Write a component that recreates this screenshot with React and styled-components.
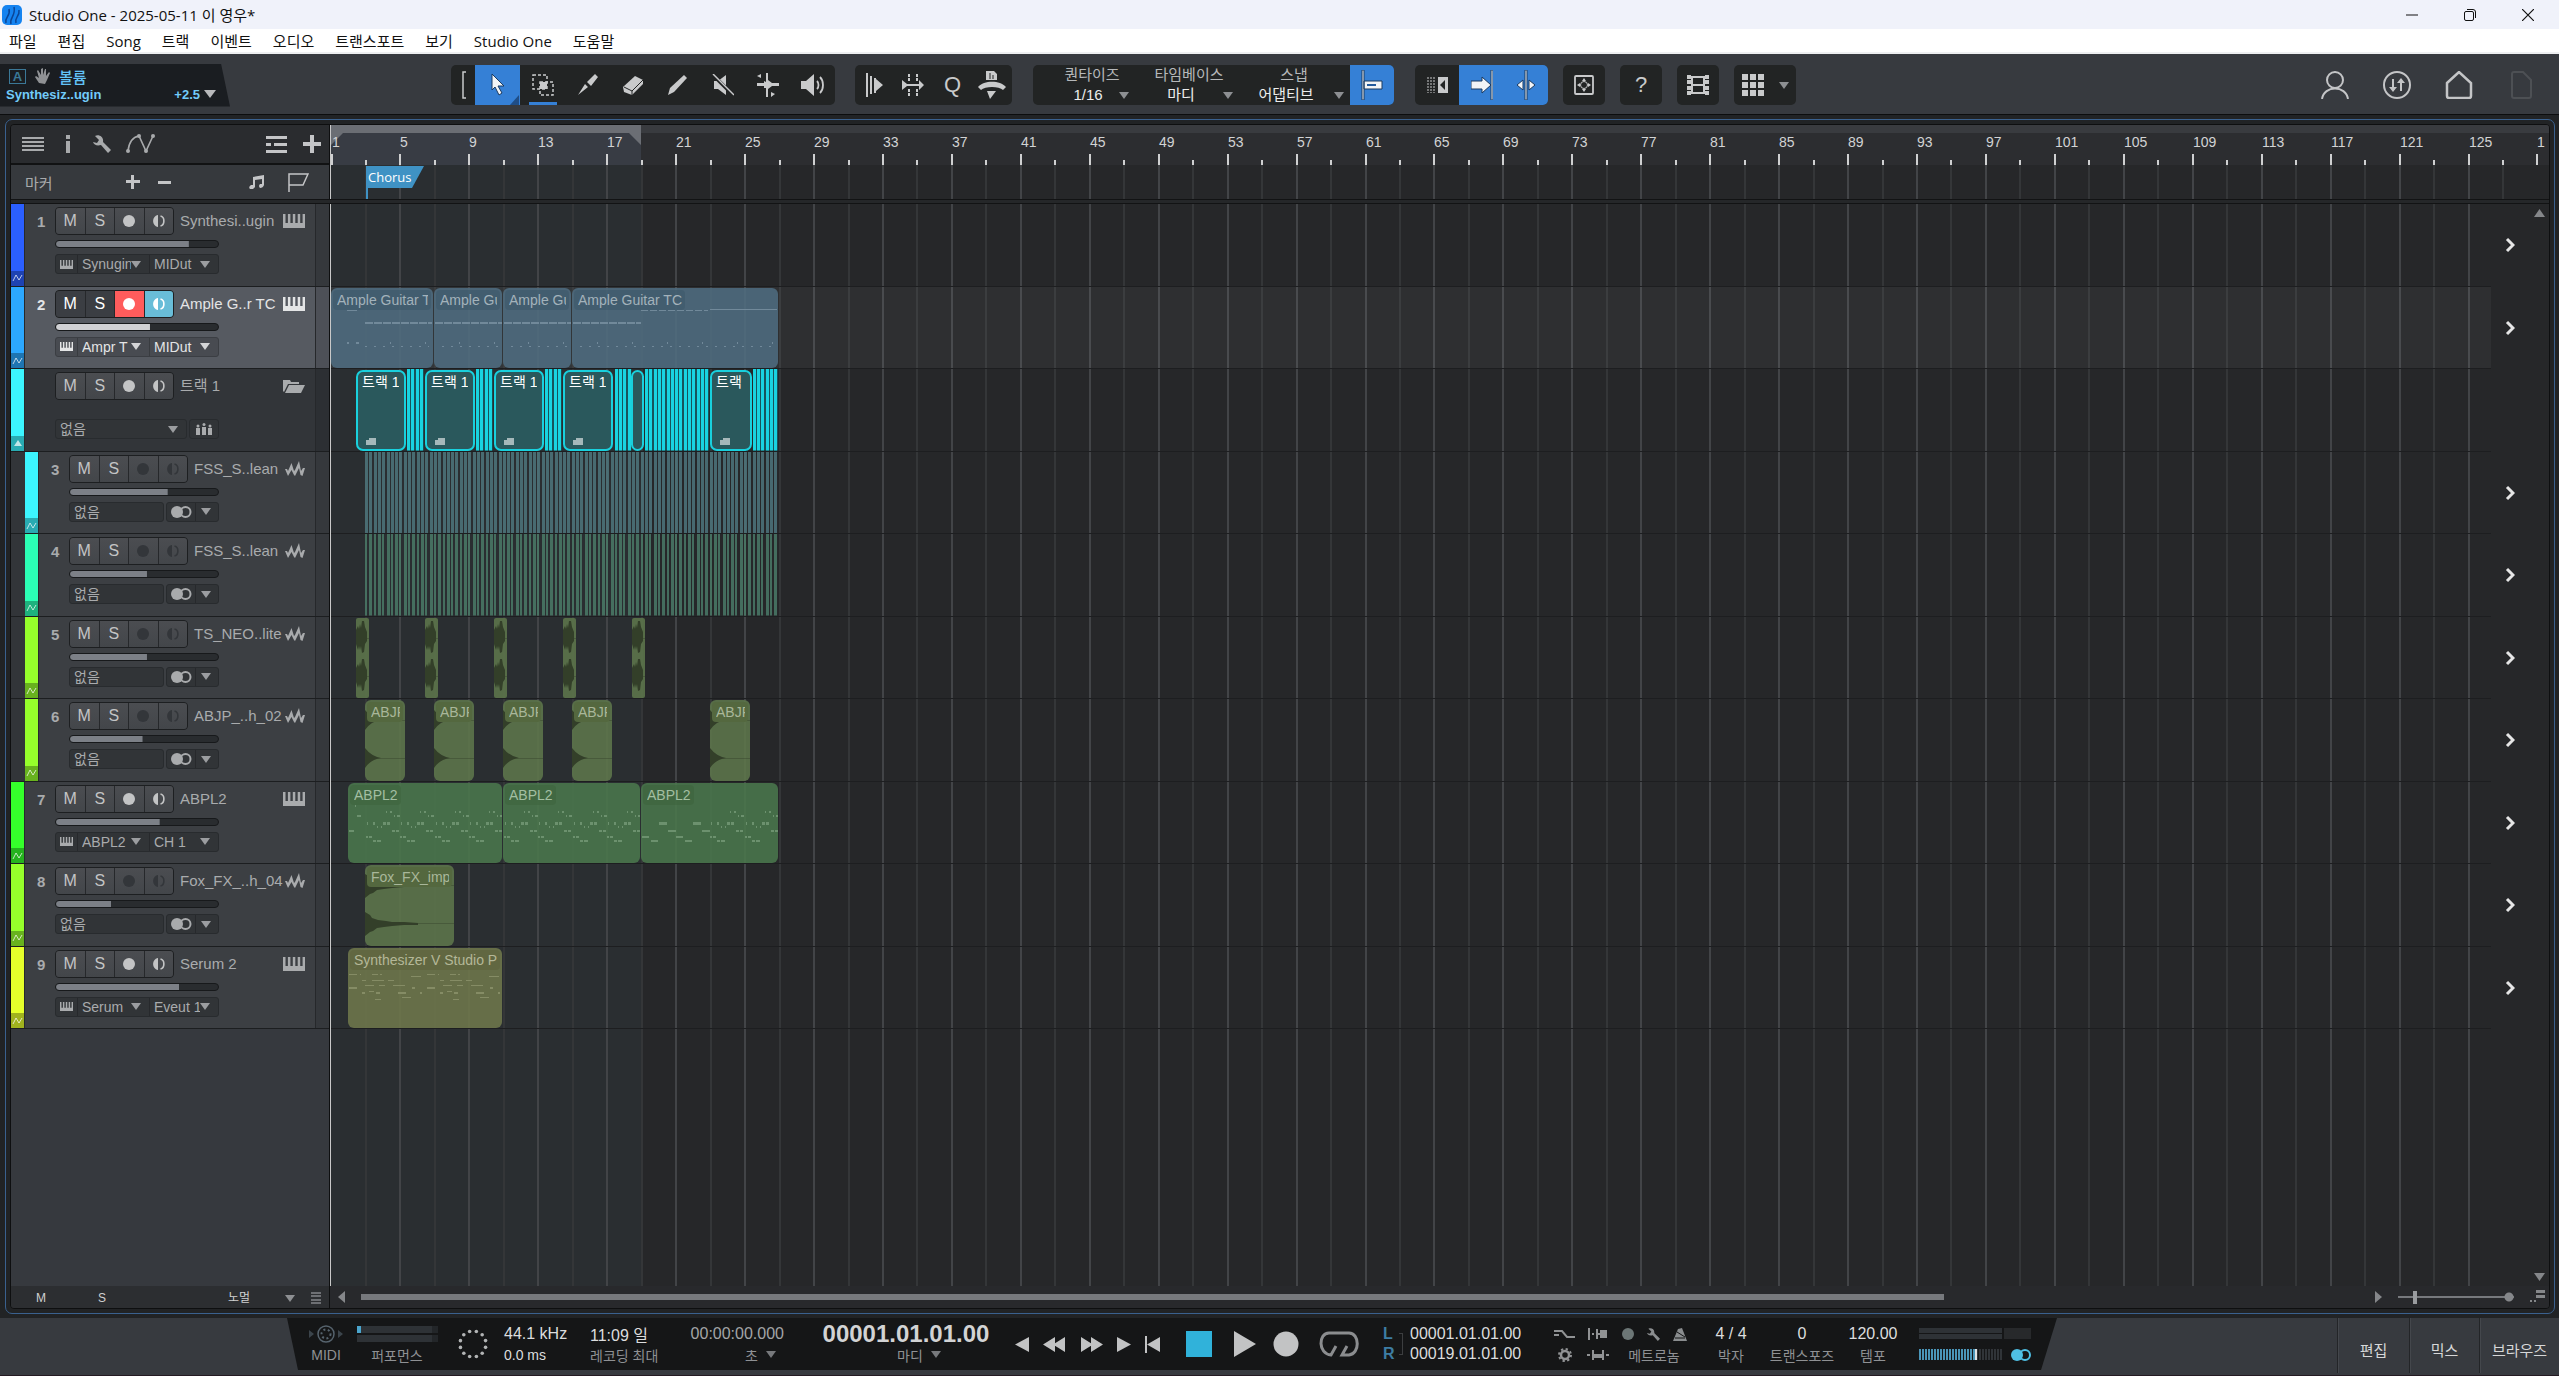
import React from 'react';
import styled, { createGlobalStyle, css } from 'styled-components';

const BAR = 17.234;
const LAST_BAR = 129;
const LOOP_END = 19;

const barX = (bar) => Math.floor((bar - 1) * BAR);

const GlobalStyle = createGlobalStyle`
  * { box-sizing: border-box; }
  html, body { margin: 0; height: 100%; }
  body {
    background: #232527;
    color: #a9abad;
    font-family: 'Liberation Sans', 'Noto Sans CJK KR', sans-serif;
    font-size: 15px;
    overflow: hidden;
  }
  button, select, input {
    margin: 0;
    padding: 0;
    border: none;
    border-radius: 0;
    background: none;
    color: inherit;
    font: inherit;
    appearance: none;
    outline: none;
  }
  svg { display: block; flex: none; }
`;

/* ---------- window ---------- */

const Window = styled.div`
  display: flex;
  flex-direction: column;
  height: 100vh;
`;

const TitleBar = styled.header`
  display: flex;
  align-items: center;
  height: 29px;
  padding: 0 2px;
  background: #f0f2fa;
  color: #111;
  font-family: 'Open Sans', 'Noto Sans CJK KR', sans-serif;
`;

const Title = styled.h1`
  margin: 0 auto 0 7px;
  font-size: 15px;
  font-weight: 400;
  line-height: 20px;
`;

const WindowButton = styled.button`
  display: grid;
  place-items: center;
  width: 58px;
  height: 29px;
`;

const MenuBar = styled.nav`
  display: flex;
  align-items: center;
  gap: 21px;
  height: 25px;
  padding-left: 9px;
  border-bottom: 2px solid #eeeff1;
  background: #fff;
  color: #111;
  font-family: 'Open Sans', 'Noto Sans CJK KR', sans-serif;
  font-size: 15px;
`;

const MenuItem = styled.button`
  line-height: 20px;
  white-space: nowrap;
`;

/* ---------- toolbar ---------- */

const Toolbar = styled.div`
  display: flex;
  align-items: center;
  height: 61px;
  padding-top: 2px;
  border-bottom: 1px solid #0c0d0e;
  background: #373a3f;
`;

const InfoBox = styled.div`
  display: flex;
  flex-direction: column;
  justify-content: center;
  width: 230px;
  height: 43px;
  margin-right: 221px;
  padding: 0 14px 0 6px;
  background: #1a1d21;
  clip-path: polygon(0 0, 221px 0, 230px 100%, 0 100%);
  color: #62c3f8;
`;

const InfoLine = styled.div`
  display: flex;
  align-items: center;
  gap: ${(p) => (p.$indent ? 8 : 4)}px;
  height: 18px;
  padding-left: ${(p) => (p.$indent ? '3px' : '0')};
  font-size: ${(p) => (p.$indent ? '15px' : '13px')};
  font-weight: ${(p) => (p.$indent ? 500 : 700)};
  color: ${(p) => (p.$indent ? '#62c3f8' : '#72cbfa')};
`;

const AutoMark = styled.span`
  width: 17px;
  height: 15px;
  border: 1px solid #3b7897;
  color: #3b7897;
  font-size: 13px;
  font-weight: 700;
  line-height: 13px;
  text-align: center;
`;

const Push = styled.span`
  margin-left: auto;
`;

const ToolGroup = styled.div`
  display: flex;
  height: 40px;
  margin-right: ${(p) => p.$gap || 15}px;
  border-radius: 5px;
  background: #222424;
  overflow: hidden;
`;

const ToolButton = styled.button`
  display: flex;
  align-items: center;
  justify-content: center;
  gap: 15px;
  width: ${(p) => p.$w || 45}px;
  height: 40px;
  background: ${(p) => (p.$on ? '#3580d6' : 'transparent')};
  color: ${(p) => (p.$on ? '#f2f4f6' : '#c9cacb')};
  font-size: 22px;
  ${(p) => p.$marked && css`
    background: linear-gradient(#3580d6, #3580d6) center bottom / 28px 3px no-repeat;
  `}
`;

const GroupHandle = styled.div`
  display: grid;
  place-items: center;
  width: 24px;
`;

const ToolField = styled.label`
  display: grid;
  grid-template-columns: 1fr 22px;
  grid-template-rows: 20px 20px;
  align-items: center;
  width: ${(p) => p.$w}px;
  padding-left: ${(p) => p.$pad}px;
  color: #b6b8ba;
  line-height: 18px;
  text-align: center;
  white-space: nowrap;

  span {
    grid-column: 1 / -1;
    padding-right: ${(p) => (p.$pad > 20 ? 14 : 6)}px;
  }

  select {
    color: #eceded;
    text-align-last: center;
  }

  svg { justify-self: center; }
`;

const RightTools = styled.div`
  display: flex;
  gap: 34px;
  margin: 0 24px 0 auto;
  color: #c4c5c7;
`;

const PlainButton = styled.button`
  display: grid;
  place-items: center;
  min-width: ${(p) => p.$w || 0}px;
  color: ${(p) => p.$color || 'inherit'};
`;

/* ---------- workspace ---------- */

const Workspace = styled.main`
  flex: 1;
  min-height: 0;
  display: flex;
  padding: 4px 4px 4px 5px;
  background: #212325;
`;

const Frame = styled.section`
  flex: 1;
  min-width: 0;
  padding: 4px;
  border: 1px solid #3a618f;
  border-radius: 7px;
`;

const Panel = styled.div`
  display: grid;
  grid-template-columns: 319px minmax(0, 1fr);
  grid-template-rows: 40px 34px 5px minmax(0, 1fr) 22px;
  height: 100%;
  border: 1px solid #0e0f10;
  border-radius: 4px;
  background: #252628;
  overflow: hidden;
`;

const SideCell = styled.div`
  display: flex;
  align-items: center;
  border-right: 1px solid #0e0f10;
`;

const SideTools = styled(SideCell)`
  gap: 14px;
  padding: 0 8px 0 11px;
  border-bottom: 2px solid #111213;
  background: #2a2c2f;
  color: #a8aaac;
`;

const MarkerHead = styled(SideCell)`
  padding: 0 20px 0 14px;
  background: #36393d;
  color: #a8aaac;
`;

const MarkerTools = styled.div`
  display: flex;
  align-items: center;
  gap: ${(p) => p.$gap}px;
  margin-left: ${(p) => p.$left || 'auto'};
  color: #c4c5c7;
`;

const Divider = styled.div`
  grid-column: 1 / -1;
  border: 1px solid #121314;
  border-width: 1px 0;
  background: #252729;
`;

const loopBackground = (inner, outer) => css`
  background: linear-gradient(${inner}, ${inner}) left / ${barX(LOOP_END)}px 100% no-repeat ${outer};
`;

const Ruler = styled.div`
  position: relative;
  border-left: 1px solid #c9c9c9;
  overflow: hidden;
  ${loopBackground('#383c44', '#2c2d30')}
`;

const BarNumber = styled.span`
  position: absolute;
  top: 9px;
  color: #d2d3d4;
  font-size: 14px;
  line-height: 16px;
`;

const MarkerLane = styled.div`
  position: relative;
  border-left: 1px solid #c9c9c9;
  overflow: hidden;
  ${loopBackground('#2a2e31', '#262729')}
`;

const Canvas = styled.svg`
  position: absolute;
  inset: 0;
  width: 100%;
  height: 100%;
`;

const MarkerFlag = styled.div`
  position: absolute;
  top: 1px;
  height: 33px;
  border-left: 2px solid #3f92c4;
`;

const MarkerName = styled.span`
  display: block;
  width: 56px;
  height: 22px;
  background: #3f92c4;
  clip-path: polygon(0 0, 100% 0, 44px 100%, 0 100%);
  color: #fff;
  font-family: 'Open Sans', sans-serif;
  font-size: 13px;
  line-height: 23px;
`;

/* ---------- track list ---------- */

const TrackColumn = styled.div`
  border-right: 1px solid #0e0f10;
  background: #36393e;
  overflow: hidden;
`;

const TrackRows = styled.div`
  display: grid;
  grid-template-rows: repeat(10, 1fr);
  height: 825px;
`;

const Track = styled.div`
  display: grid;
  grid-template-columns: 14px minmax(0, 1fr) 14px;
  padding-left: ${(p) => (p.$nested ? 14 : 0)}px;
  border-bottom: 1px solid #1c1e20;
  background: ${(p) => (p.$selected ? '#565a61' : p.$folder ? '#323539' : p.$nested ? 'linear-gradient(90deg, #323539 14px, #3c3f43 14px)' : '#3c3f43')};
  color: ${(p) => (p.$selected ? '#e4e5e6' : '#a9abad')};
`;

const ColorBar = styled.div`
  display: flex;
  flex-direction: column;
  justify-content: flex-end;
  border-right: 1px solid #27292c;
  background: ${(p) => p.$color};
`;

const ColorFoot = styled.div`
  display: grid;
  place-items: center;
  height: 15px;
  background: rgba(0, 0, 0, 0.3);
  color: rgba(255, 255, 255, 0.7);
`;

const TrackStrip = styled.div`
  border-left: 1px solid #26282b;
  background: rgba(0, 0, 0, 0.1);
`;

const TrackBody = styled.div`
  display: grid;
  grid-template-columns: 30px minmax(0, 1fr);
  grid-template-rows: 33px 11px 26px;
`;

const TrackNumber = styled.span`
  padding-left: 12px;
  font-weight: 700;
  line-height: 36px;
`;

const TrackTop = styled.div`
  display: flex;
  align-items: center;
  padding: 1px 10px 0 0;
`;

const TrackName = styled.span`
  flex: 1;
  padding-left: 6px;
  line-height: 24px;
  white-space: nowrap;
`;

const ButtonRow = styled.div`
  display: grid;
  grid-template-columns: repeat(4, 1fr);
  gap: 1px;
  width: 119px;
  height: 28px;
  border: 1px solid #1d1f21;
  border-radius: 4px;
  background: #26282b;
  overflow: hidden;
`;

const TrackButton = styled.button`
  display: grid;
  place-items: center;
  background: ${(p) => p.$bg || 'linear-gradient(#4b4d51, #43464a)'};
  color: ${(p) => (p.$bg ? '#fff' : p.$off ? '#33363a' : '#c3c4c5')};
  font-size: 16px;
`;

const NoFader = styled.span`
  grid-column: 2;
`;

const Fader = styled.input`
  grid-column: 2;
  align-self: end;
  width: ${(p) => (p.$nested ? 150 : 164)}px;
  height: 8px;
  border: 1px solid #17191b;
  border-radius: 4px;
  background: linear-gradient(${(p) => p.$fill}, ${(p) => p.$fill}) left / ${(p) => p.value}% 100% no-repeat #292c2f;

  &::-webkit-slider-thumb { appearance: none; width: 1px; height: 6px; }
`;

const Routing = styled.div`
  grid-column: 2;
  align-self: end;
  display: flex;
  gap: 2px;
  width: ${(p) => (p.$nested ? 150 : 164)}px;
  height: 20px;
`;

const Slot = styled.label`
  display: flex;
  align-items: center;
  flex: ${(p) => (p.$w ? `0 0 ${p.$w}px` : '1')};
  min-width: 0;
  border: 1px solid ${(p) => (p.$bright ? '#3b3e43' : '#282b2e')};
  border-radius: 3px;
  background: ${(p) => (p.$bright ? 'rgba(0, 0, 0, 0.16)' : '#313437')};
  font-size: 14px;
`;

const SlotPart = styled.span`
  display: flex;
  align-items: center;
  justify-content: ${(p) => (p.$center ? 'center' : 'space-between')};
  width: ${(p) => p.$w}px;
  height: 18px;
  padding: ${(p) => (p.$center ? '0' : '0 8px 0 4px')};
  border-left: ${(p) => (p.$line ? '1px solid rgba(0, 0, 0, 0.2)' : 'none')};

  select {
    flex: 1;
    min-width: 0;
    overflow: hidden;
  }
`;

/* ---------- arrangement ---------- */

const Arrange = styled.div`
  display: grid;
  grid-template-columns: minmax(0, 1fr) 38px 20px;
  border-left: 1px solid #c9c9c9;
  background: #262729;
  overflow: hidden;
`;

const Lanes = styled.div`
  position: relative;
  overflow: hidden;
  ${loopBackground('#2a2e31', '#262729')}
`;

const LaneRows = styled(TrackRows)`
  position: relative;
`;

const Lane = styled.div`
  position: relative;
  border-bottom: 1px solid #1d1e20;
  background: ${(p) => (p.$selected ? 'rgba(255, 255, 255, 0.04)' : 'transparent')};
`;

const ChevronCell = styled.div`
  display: grid;
  place-items: center;
  color: #e6e6e6;
`;

const ScrollColumn = styled.div`
  display: flex;
  flex-direction: column;
  justify-content: space-between;
  align-items: center;
  padding: 5px 0;
  color: #85878a;
`;

const Clip = styled.div`
  position: absolute;
  top: 1px;
  bottom: 0;
  border-radius: ${(p) => (p.$narrow ? 2 : 6)}px;
  background: ${(p) => p.$color};
  overflow: hidden;
  ${(p) => p.$framed && css`
    border: 2px solid #19d0dd;
    border-radius: 7px;
  `}
`;

const ClipLabel = styled.span`
  position: absolute;
  z-index: 1;
  top: ${(p) => (p.$framed ? 0 : 2)}px;
  left: 2px;
  max-width: calc(100% - 4px);
  height: 20px;
  padding: 0 ${(p) => (p.$framed ? 0 : 3)}px 0 ${(p) => (p.$framed ? 2 : 4)}px;
  border-radius: 4px;
  background: ${(p) => p.$bg};
  color: ${(p) => p.$color};
  font-size: 14px;
  line-height: 20px;
  white-space: nowrap;
  overflow: hidden;
`;

const ClipText = styled.span`
  display: block;
  overflow: hidden;
`;

const FolderMark = styled.svg`
  position: absolute;
  left: 8px;
  bottom: 4px;
`;

/* ---------- panel footer ---------- */

const SideFoot = styled(SideCell)`
  padding: 2px 8px 0 25px;
  background: #2c2e31;
  color: #d0d1d2;
  font-size: 12px;
`;

const FootButton = styled.button`
  width: ${(p) => p.$w}px;
  text-align: left;
`;

const FootMode = styled.label`
  display: flex;
  align-items: center;
  gap: 34px;
  margin: 0 16px 0 auto;
`;

const ScrollRow = styled.div`
  display: flex;
  align-items: center;
  gap: 10px;
  padding: 0 4px 0 8px;
  background: #28292c;
  color: #85878a;
`;

const ScrollTrack = styled.div`
  flex: 1;
  margin: 0 0 0 6px;
`;

const ScrollThumb = styled.div`
  width: 79%;
  height: 6px;
  background: #77797d;
`;

const ZoomSlider = styled.input`
  width: 116px;
  height: 14px;
  margin: 0 6px;
  background:
    radial-gradient(circle, #85878a 4px, transparent 5px) right / 10px 10px no-repeat,
    linear-gradient(#77797d, #77797d) center / 100% 2px no-repeat;

  &::-webkit-slider-thumb {
    appearance: none;
    width: 4px;
    height: 13px;
    background: #9a9c9f;
  }
`;

/* ---------- transport ---------- */

const TransportBar = styled.footer`
  display: flex;
  height: 58px;
  padding-left: 287px;
  background: #373a3f;
  border-bottom: 1px solid #241a22;
`;

const Transport = styled.div`
  display: flex;
  align-items: center;
  width: 1770px;
  height: 52px;
  padding-left: 13px;
  background: #151617;
  clip-path: polygon(0 0, 100% 0, 1754px 100%, 11px 100%);
`;

const Cell = styled.div`
  display: flex;
  flex-direction: column;
  align-items: ${(p) => p.$align || 'center'};
  width: ${(p) => p.$w}px;
  padding-right: ${(p) => p.$right || 0}px;
`;

const Value = styled.div`
  display: flex;
  align-items: center;
  justify-content: center;
  height: 21px;
  color: ${(p) => p.$color || '#dcddde'};
  font-size: ${(p) => (p.$big ? 24 : 16)}px;
  font-weight: ${(p) => (p.$big ? 700 : 400)};
  white-space: nowrap;
`;

const Caption = styled.div`
  display: flex;
  align-items: center;
  gap: 8px;
  height: 20px;
  padding-left: ${(p) => p.$left || 0}px;
  padding-right: ${(p) => p.$right || 0}px;
  color: ${(p) => p.$color || '#8f9194'};
  font-size: 14px;
  white-space: nowrap;
`;

const TransportButton = styled.button`
  display: grid;
  place-items: center;
  width: ${(p) => p.$w}px;
  height: 40px;
  color: ${(p) => p.$color || '#c2c3c4'};
`;

const Locators = styled.div`
  display: grid;
  grid-template-columns: 16px 11px auto;
  grid-template-rows: 20px 20px;
  align-items: center;
  width: 177px;
  padding-left: 12px;
  color: #dcddde;
  font-size: 16px;

  b { color: #3d7da3; }
`;

const LocatorLink = styled.span`
  grid-column: 2;
  grid-row: 1 / 3;
  width: 4px;
  height: 22px;
  border: 1px solid #3c3e40;
  border-width: 1px 1px 1px 0;
`;

const IconGrid = styled.div`
  display: grid;
  grid-template-columns: 33px 33px;
  grid-template-rows: 21px 20px;
  place-items: center;
  width: 67px;
  color: #909294;
`;

const IconLine = styled.div`
  display: flex;
  align-items: center;
  gap: 13px;
  height: 21px;
  color: #8a8d8f;
`;

const ViewButtons = styled.div`
  display: grid;
  grid-template-columns: 72px 70px 80px;
  margin-left: auto;
  height: 55px;
`;

const ViewButton = styled.button`
  border-left: 1px solid #232528;
  box-shadow: inset 1px 0 #44474c;
  padding-top: 8px;
  color: #d6d7d8;
  font-size: 15px;
`;

/* ---------- icons ---------- */

const Glyph = ({ w, h, children, ...rest }) => (
  <svg width={w} height={h} viewBox={`0 0 ${w} ${h}`} fill="currentColor" aria-hidden="true" {...rest}>
    {children}
  </svg>
);

const line = { fill: 'none', stroke: 'currentColor' };

const Down = ({ color = '#8d8f92' }) => (
  <Glyph w={10} h={7} style={{ color }}><path d="M0 0h10L5 7z" /></Glyph>
);

const Piano = ({ small }) => (
  <svg width={small ? 13 : 22} height={small ? 9 : 14} viewBox="0 0 22 14" preserveAspectRatio="none" fill="currentColor" aria-hidden="true">
    <path d="M0 0h2.500v9h2.400V0h2.500v9h2.400V0h2.500v9h2.400V0h2.500v9h2.400V0H22v14H0z" />
  </svg>
);

const Wave = () => (
  <Glyph w={20} h={16}>
    <path d="M0 8l2 0 1 2L6.500 2l2.500 8 1-1L14 0l2 10 2-3h2l-2.500 8-2-1L14 7l-4 8-1-1-2.500-5L3 15z" />
  </Glyph>
);

const Wrench = ({ size = 18 }) => (
  <svg width={size} height={size} viewBox="0 0 18 18" fill="currentColor" aria-hidden="true">
    <path d="M2 1c4-2 9 1 8 6l8 8-3 3-7-8c-4 1-7 0-8-3l4 1 2-3z" />
  </svg>
);

const Monitor = () => (
  <Glyph w={12} h={12}>
    <path d="M5 0v12C-1.500 11-1.500 1 5 0z" />
    <path d="M7.500 1c4.500 1 4.500 9 0 10" {...line} strokeWidth="1.600" />
  </Glyph>
);

const Stereo = ({ color }) => (
  <Glyph w={21} h={12} style={{ color }}>
    <circle cx="6" cy="6" r="6" />
    <circle cx="14.500" cy="6" r="5" {...line} strokeWidth="2" />
  </Glyph>
);

const FolderIcon = () => (
  <Glyph w={22} h={14}><path d="M0 1h7l1 2h8v2H5L1 13l-1-1zM6 6h16l-4 8H2z" /></Glyph>
);

const Tool = ({ name }) => {
  switch (name) {
    case 'arrow':
      return <Glyph w={44} h={40}><path d="M16 9l12 12h-6l4 7-3 2-4-8-3 3z" stroke="#1b3a60" /><path d="M43 30v10h-9z" fill="#1f4d86" /></Glyph>;
    case 'range':
      return (
        <Glyph w={22} h={22}>
          <path d="M1 1h14v14H1z" {...line} strokeWidth="1.500" strokeDasharray="3 2" />
          <path d="M8 8h13v13H8z" {...line} strokeWidth="1.500" strokeDasharray="3 2" />
          <path d="M8 8h7v7H8z" />
        </Glyph>
      );
    case 'split':
      return <Glyph w={22} h={22}><path d="M1 21l7-11 3 3zM10 8l8-8 3 3-7 9z" /></Glyph>;
    case 'eraser':
      return <Glyph w={22} h={20}><path d="M1 12L13 1l8 4v4L10 20l-8-3z" /><path d="M2 12l8 4L21 5M10 16v4" fill="none" stroke="#222424" /></Glyph>;
    case 'paint':
      return <Glyph w={22} h={22}><path d="M1 21l2-7L17 1l3 3L7 18z" /></Glyph>;
    case 'mute':
      return <Glyph w={22} h={22}><path d="M2 7h4l8-6v20l-8-6H2z" /><path d="M0 0l22 22" stroke="#222424" strokeWidth="3.500" /><path d="M1 0l21 21" {...line} strokeWidth="1.500" /></Glyph>;
    case 'bend':
      return <Glyph w={22} h={24}><path d="M0 10h7V8l2 1V0h2v7l4 3h7v3h-7l-4 3v8H9v-9l-2 0v-2H0zM4 1v4L0 3zM14 19v5l4-3z" /></Glyph>;
    case 'listen':
      return <Glyph w={24} h={22}><path d="M0 7h5l8-7v22l-8-7H0z" /><path d="M16 7c2 2 2 6 0 8M19 3c4 4 4 12 0 16" {...line} strokeWidth="1.800" /></Glyph>;
    case 'strip':
      return <Glyph w={17} h={24}><path d="M0 0h2v24H0zM4 3h2v18H4zM8 5h2v4l0-3 7 6-7 6v2H8z" /></Glyph>;
    case 'stretch':
      return <Glyph w={22} h={22}><path d="M0 6l5 4h12V6l5 5-5 5v-4H5l-5 4z" /><path d="M7 0v7M7 15v7M15 0v7M15 15v7" {...line} strokeWidth="2" strokeDasharray="3 1" /></Glyph>;
    case 'humanize':
      return <Glyph w={28} h={28}><path d="M8 0h8l3 3v6H8zM0 16c6-7 22-7 28 0l-3 3c-4-4-18-4-22 0zM9 20h9l-6 8z" /><path d="M12 2v6M15 4v4" stroke="#222424" /></Glyph>;
    case 'snap':
      return <Glyph w={22} h={30}><path d="M1 0h2v30H1zM3 11h18v8H3z" stroke="#1b3a60" /><path d="M6 14h9v2H6z" fill="#235a9c" /></Glyph>;
    case 'back':
      return <Glyph w={21} h={16}><path d="M1 0v16M4 0v16M7 0v16" {...line} strokeDasharray="2 1" /><path d="M11 0h10v16H11z" /><path d="M18 3v10l-5-5z" fill="#222424" /></Glyph>;
    case 'follow':
      return <Glyph w={22} h={30}><path d="M0 11h11V7l9 8-9 8v-4H0zM20 0h2v30h-2z" stroke="#1b3a60" /></Glyph>;
    case 'cursor':
      return <Glyph w={18} h={30}><path d="M8 0h2v30H8zM6 10v10l-6-5zM12 10v10l6-5z" stroke="#1b3a60" /></Glyph>;
    case 'target':
      return <Glyph w={20} h={20}><rect x="1" y="1" width="18" height="18" rx="1" {...line} strokeWidth="1.800" /><circle cx="10" cy="10" r="3.500" {...line} /><path d="M10 3l2 3H8zM10 17l2-3H8zM3 10l3-2v4zM17 10l-3-2v4z" /></Glyph>;
    case 'film':
      return <Glyph w={22} h={20}><path d="M5 2h12v16H5zM5 10h12" {...line} strokeWidth="2" /><path d="M0 0h4v4H0zM0 5h4v4H0zM0 11h4v4H0zM0 16h4v4H0zM18 0h4v4h-4zM18 5h4v4h-4zM18 11h4v4h-4zM18 16h4v4h-4z" /></Glyph>;
    case 'grid':
      return <Glyph w={22} h={22}>{[0, 8, 16].map((x) => [0, 8, 16].map((y) => <rect key={`${x}-${y}`} x={x} y={y} width="6" height="6" />))}</Glyph>;
    default:
      return null;
  }
};

/* ---------- data ---------- */

const menu = ['파일', '편집', 'Song', '트랙', '이벤트', '오디오', '트랜스포트', '보기', 'Studio One', '도움말'];

const tracks = [
  { no: 1, name: 'Synthesi..ugin', color: '#2b5fff', kind: 'midi', level: 82, input: 'Synugin', output: 'MIDut' },
  { no: 2, name: 'Ample G..r TC', color: '#2ca8ff', kind: 'midi', level: 58, input: 'Ampr T', output: 'MIDut', selected: true },
  { name: '트랙 1', color: '#3cf5ff', kind: 'folder' },
  { no: 3, name: 'FSS_S..lean', color: '#3cf5ff', kind: 'audio', level: 66, nested: true },
  { no: 4, name: 'FSS_S..lean', color: '#2bffb5', kind: 'audio', level: 52, nested: true },
  { no: 5, name: 'TS_NEO..lite', color: '#96ff2b', kind: 'audio', level: 52, nested: true },
  { no: 6, name: 'ABJP_..h_02', color: '#96ff2b', kind: 'audio', level: 49, nested: true },
  { no: 7, name: 'ABPL2', color: '#35ff2b', kind: 'midi', level: 64, input: 'ABPL2', output: 'CH 1' },
  { no: 8, name: 'Fox_FX_..h_04', color: '#96ff2b', kind: 'audio', level: 34 },
  { no: 9, name: 'Serum 2', color: '#e5ff2b', kind: 'midi', level: 76, input: 'Serum', output: 'Eveut 1' },
];

const BLUE = 'rgba(79, 108, 128, 0.88)';
const GREEN = 'rgba(74, 120, 76, 0.88)';
const OLIVE = 'rgba(93, 118, 75, 0.88)';
const SAND = 'rgba(110, 119, 75, 0.88)';

const dashes = (from, to, y, step, w, h = 2) => {
  const out = [];
  for (let x = from; x < to; x += step) out.push([x, y, Math.min(w, to - x), h]);
  return out;
};

const guitarNotes = (width, lead) => [
  ...(lead ? [[16, 22, 10, 1], [16, 54, 2, 2], [25, 54, 3, 2]] : []),
  ...dashes(lead ? 34 : 1, Math.min(width, 69 + (lead ? 32 : 0)), 34, 9, 8),
  ...(width > 150 ? dashes(65, 68, 34, 9, 3) : []),
  ...dashes(lead ? 34 : 8, width - 4, 58, 9, 2, 1),
  ...dashes(lead ? 59 : 25, width - 2, 54, 35, 1, 2),
  ...(width > 150 ? [...dashes(69, 136, 22, 9, 7, 1), [138, 21, 67, 1]] : []),
];

const riff = [
  [1, 39, 1, 3], [7, 39, 2, 3], [17, 39, 3, 3], [21, 39, 3, 3],
  [11, 43, 1, 2], [15, 43, 1, 2], [20, 28, 1, 2], [24, 28, 2, 2],
  [28, 32, 1, 2], [31, 32, 3, 2], [26, 47, 3, 2], [30, 47, 3, 2],
  [0, 53, 2, 2], [3, 53, 3, 2], [7, 57, 3, 2], [11, 57, 4, 2],
];

const sparse = [[17, 39, 8, 3], [26, 47, 8, 2], [0, 53, 7, 2], [9, 57, 7, 2]];

const repeat = (pattern, offsets) => offsets.flatMap((o) => pattern.map(([x, y, w, h]) => [x + o, y, w, h]));

const pickup = [[7, 22, 1, 2], [9, 32, 4, 2], [1, 47, 5, 2]];

const serumPhrase = [
  [1, 26, 8, 1], [12, 26, 1, 1], [24, 26, 6, 1], [32, 26, 2, 1], [14, 32, 4, 1], [24, 32, 12, 1], [40, 32, 6, 1],
  [17, 37, 9, 1], [31, 37, 6, 1], [45, 37, 12, 1], [1, 39, 8, 2], [14, 44, 3, 2], [28, 44, 4, 2], [50, 44, 8, 2],
  [21, 43, 5, 1], [54, 49, 9, 1], [27, 51, 6, 1], [64, 39, 3, 2], [72, 44, 2, 2], [63, 28, 10, 1],
];

const BLUE_INK = '#71899a';
const GREEN_INK = '#6c916e';
const SAND_INK = '#858c65';

const clips = {
  1: [
    { from: 1, to: 7, color: BLUE, label: 'Ample Guitar T', notes: guitarNotes(102, true), ink: BLUE_INK },
    { from: 7, to: 11, color: BLUE, label: 'Ample Gu', notes: guitarNotes(68), ink: BLUE_INK },
    { from: 11, to: 15, color: BLUE, label: 'Ample Gu', notes: guitarNotes(68), ink: BLUE_INK },
    { from: 15, to: 27, color: BLUE, label: 'Ample Guitar TC', notes: guitarNotes(206), ink: BLUE_INK },
  ],
  2: [
    ...[2.5, 6.5, 10.5, 14.5].map((b) => ({ from: b, to: b + 2.95, framed: true, label: '트랙 1' })),
    { from: 18.45, to: 19.25, framed: true },
    { from: 23, to: 25.5, framed: true, label: '트랙' },
  ],
  5: [2.5, 6.5, 10.5, 14.5, 18.5].map((b) => ({ from: b, to: b + 0.8, color: OLIVE, wave: 'burst', narrow: true })),
  6: [3, 7, 11, 15, 23].map((b) => ({ from: b, to: b + 2.4, color: OLIVE, wave: 'decay', label: 'ABJP' })),
  7: [
    { from: 2, to: 11, color: GREEN, label: 'ABPL2', notes: [...pickup, ...repeat(riff, [18, 52, 87, 121])], ink: GREEN_INK },
    { from: 11, to: 19, color: GREEN, label: 'ABPL2', notes: repeat(riff, [1, 35, 70, 104]), ink: GREEN_INK },
    { from: 19, to: 27, color: GREEN, label: 'ABPL2', notes: [...repeat(sparse, [1, 35]), ...repeat(riff, [69, 104])], ink: GREEN_INK },
  ],
  8: [{ from: 3, to: 8.2, color: OLIVE, wave: 'long', label: 'Fox_FX_imp' }],
  9: [{ from: 2, to: 11, color: SAND, label: 'Synthesizer V Studio P', notes: repeat(serumPhrase, [0, 78]), ink: SAND_INK }],
};

const labelColors = {
  [BLUE]: ['rgba(60, 88, 106, 0.55)', '#a3b2bb'],
  [GREEN]: ['rgba(62, 100, 62, 0.6)', '#a3bfa2'],
  [OLIVE]: ['#54683f', '#a9b79a'],
  [SAND]: ['rgba(96, 100, 62, 0.7)', '#b4b798'],
};

const wavePaths = {
  burst: (c) => `M0 ${c - 8}l2-4 1 3 1-5 1 4 1-7 2 0 1 6 2 5 0 9-2 3-1 8-2 1-1-7-1 4-1-4-1 4-2-6z`,
  decay: (c) => `M0 ${c - 10}q6 8 16 10q-10 1-16 10z`,
  long: (c) => `M0 ${c - 11}l5 3 2 3 6 2 8 1 6 1 12 0 14 1v2l-14 0-12 1-8 1-7 1-4 3-3 1-5 4z`,
};

/* ---------- parts ---------- */

function GridLines() {
  const bars = [];
  for (let b = 3; b < LAST_BAR; b += 2) bars.push(b);
  return (
    <Canvas aria-hidden="true">
      {bars.map((b) => (
        <rect key={b} x={barX(b)} y="0" width="2" height="100%" fill={b % 4 === 1 ? '#424447' : '#343638'} />
      ))}
    </Canvas>
  );
}

function BarRuler() {
  const bars = [];
  for (let b = 1; b <= LAST_BAR; b += 2) bars.push(b);
  const end = barX(LOOP_END);
  return (
    <Ruler>
      <Canvas aria-hidden="true">
        <rect width="100%" height="8" fill="#393b3f" />
        <path d={`M0 0H${end}V20L${end - 12} 8H12L0 20z`} fill="#6b6e74" />
        {bars.map((b) => (
          <rect key={b} x={barX(b)} y={b % 4 === 1 ? 29 : 35} width="2" height="12" fill="#cfd0d1" />
        ))}
      </Canvas>
      {bars.filter((b) => b % 4 === 1).map((b) => (
        <BarNumber key={b} style={{ left: barX(b) + 1 }}>{b === LAST_BAR ? '1' : b}</BarNumber>
      ))}
    </Ruler>
  );
}

function Stripes({ ranges, fill, thin, base }) {
  return (
    <Canvas aria-hidden="true">
      {ranges.map(([from, to]) => {
        const out = [];
        const count = Math.round((to - from) * 4);
        for (let i = 0; i < count; i += 1) {
          const x = Math.floor((from - 1) * BAR + i * (BAR / 4));
          out.push(<rect key={i} x={x} y="0" width={thin && i % 2 === 0 ? 2 : 3} height="100%" fill={fill} />);
        }
        return (
          <g key={from}>
            {base && <rect x={(from - 1) * BAR} width={(to - from) * BAR - 1} height="100%" fill={base} />}
            {out}
          </g>
        );
      })}
    </Canvas>
  );
}

function ClipView({ from, to, color = '#2a585c', framed, label, notes, ink, wave, narrow }) {
  const [bg, fg] = framed ? ['transparent', '#fff'] : labelColors[color];
  const left = barX(from);
  return (
    <Clip $color={color} $framed={framed} $narrow={narrow} style={{ left, width: barX(to) - left - 1 }}>
      {label && <ClipLabel $framed={framed} $bg={bg} $color={fg}><ClipText>{label}</ClipText></ClipLabel>}
      {notes && (
        <Canvas fill={ink} aria-hidden="true">
          {notes.map(([x, y, w, h], i) => <rect key={i} x={x} y={y} width={w} height={h} />)}
        </Canvas>
      )}
      {wave && (
        <Canvas fill="#333f29" aria-hidden="true">
          {[20, 58].map((c) => (
            <g key={c}>
              <rect y={c} width="100%" height="1" opacity="0.4" />
              <path d={wavePaths[wave](c)} />
            </g>
          ))}
        </Canvas>
      )}
      {framed && label && (
        <FolderMark width="10" height="7" viewBox="0 0 10 7" fill="#a5b8ba"><path d="M0 2h3V0h7v7H0z" /></FolderMark>
      )}
    </Clip>
  );
}

function TrackHeader({ no, name, color, kind, level, input, output, selected, nested }) {
  const off = kind === 'audio';
  const arrow = selected ? '#d4d5d7' : '#9b9da0';
  const dark = selected ? '#3b3e43' : undefined;
  return (
    <Track $selected={selected} $folder={kind === 'folder'} $nested={nested}>
      <ColorBar $color={color}>
        <ColorFoot>
          {kind === 'folder'
            ? <Glyph w={8} h={6}><path d="M4 0l4 6H0z" /></Glyph>
            : <Glyph w={11} h={8}><path d="M1 7l3-6 3 5 3-5" {...line} /></Glyph>}
        </ColorFoot>
      </ColorBar>
      <TrackBody>
        <TrackNumber>{no}</TrackNumber>
        <TrackTop>
          <ButtonRow>
            <TrackButton $bg={dark} aria-label={`${name} mute`}>M</TrackButton>
            <TrackButton $bg={dark} aria-label={`${name} solo`}>S</TrackButton>
            <TrackButton $off={off} $bg={selected && '#ff5c5c'} aria-label={`${name} record`}>
              <Glyph w={12} h={12}><circle cx="6" cy="6" r="6" /></Glyph>
            </TrackButton>
            <TrackButton $off={off} $bg={selected && '#69bdd8'} aria-label={`${name} monitor`}><Monitor /></TrackButton>
          </ButtonRow>
          <TrackName>{name}</TrackName>
          {kind === 'midi' && <Piano />}
          {kind === 'audio' && <Wave />}
          {kind === 'folder' && <FolderIcon />}
        </TrackTop>
        {kind === 'folder'
          ? <NoFader />
          : <Fader type="range" readOnly value={level} $nested={nested} $fill={selected ? '#d0d1d4' : '#7c8087'} aria-label={`${name} volume`} />}
        {kind === 'midi' && (
          <Routing>
            <Slot $bright={selected}>
              <SlotPart $w={21} $center><Piano small /></SlotPart>
              <SlotPart $w={72} $line>
                <select aria-label={`${name} instrument`}><option>{input}</option></select>
                <Down color={arrow} />
              </SlotPart>
              <SlotPart $w={69} $line>
                <select aria-label={`${name} channel`}><option>{output}</option></select>
                <Down color={arrow} />
              </SlotPart>
            </Slot>
          </Routing>
        )}
        {kind === 'audio' && (
          <Routing $nested={nested}>
            <Slot><SlotPart $w={90}><select aria-label={`${name} input`}><option>없음</option></select></SlotPart></Slot>
            <Slot $w={53}>
              <SlotPart $w={28} $center><Stereo /></SlotPart>
              <SlotPart $w={21} $center $line><Down color={arrow} /></SlotPart>
            </Slot>
          </Routing>
        )}
        {kind === 'folder' && (
          <Routing>
            <Slot>
              <SlotPart $w={130}>
                <select aria-label={`${name} bus`}><option>없음</option></select>
                <Down color={arrow} />
              </SlotPart>
            </Slot>
            <Slot $w={30}>
              <SlotPart $w={28} $center>
                <Glyph w={16} h={12}>
                  <path d="M0 5h4v7H0zM6 4h4v8H6zM12 5h4v7h-4z" />
                  <circle cx="2" cy="3" r="1.500" /><circle cx="8" cy="1.500" r="1.500" /><circle cx="14" cy="3" r="1.500" />
                </Glyph>
              </SlotPart>
            </Slot>
          </Routing>
        )}
      </TrackBody>
      <TrackStrip />
    </Track>
  );
}

function MainToolbar() {
  return (
    <Toolbar>
      <InfoBox>
        <InfoLine $indent>
          <AutoMark>A</AutoMark>
          <Glyph w={17} h={16} style={{ color: '#8f9194' }}>
            <path d="M5 15L1 9l1-1 3 2L3 3l1-1 3 5V1l2-1 0 7 2-6 1 0v7l3-4 1 1-3 7-2 4z" />
          </Glyph>
          <span>볼륨</span>
        </InfoLine>
        <InfoLine>
          <span>Synthesiz..ugin</span>
          <Push>+2.5</Push>
          <Glyph w={12} h={8} style={{ color: '#b9babc' }}><path d="M0 0h12L6 8z" /></Glyph>
        </InfoLine>
      </InfoBox>
      <ToolGroup $gap={20}>
        <GroupHandle><Glyph w={5} h={28} style={{ color: '#c9cacb' }}><path d="M5 1H2v26h3" {...line} strokeWidth="1.500" /></Glyph></GroupHandle>
        <ToolButton $on aria-label="Arrow"><Tool name="arrow" /></ToolButton>
        <ToolButton $marked aria-label="Range"><Tool name="range" /></ToolButton>
        {['split', 'eraser', 'paint', 'mute', 'bend', 'listen'].map((name) => (
          <ToolButton key={name} aria-label={name}><Tool name={name} /></ToolButton>
        ))}
      </ToolGroup>
      <ToolGroup $gap={21}>
        <ToolButton $w={38} aria-label="Strip silence"><Tool name="strip" /></ToolButton>
        <ToolButton $w={40} aria-label="Stretch"><Tool name="stretch" /></ToolButton>
        <ToolButton $w={39} aria-label="Quantize">Q</ToolButton>
        <ToolButton $w={40} aria-label="Humanize"><Tool name="humanize" /></ToolButton>
      </ToolGroup>
      <ToolGroup $gap={21}>
        <ToolField $w={102} $pad={30}><span>퀀타이즈</span><select><option>1/16</option></select><Down /></ToolField>
        <ToolField $w={104} $pad={10}><span>타임베이스</span><select><option>마디</option></select><Down /></ToolField>
        <ToolField $w={111} $pad={5}><span>스냅</span><select><option>어댑티브</option></select><Down /></ToolField>
        <ToolButton $w={44} $on aria-label="Snap"><Tool name="snap" /></ToolButton>
      </ToolGroup>
      <ToolGroup>
        <ToolButton $w={44} aria-label="Return"><Tool name="back" /></ToolButton>
        <ToolButton $w={45} $on aria-label="Autoscroll"><Tool name="follow" /></ToolButton>
        <ToolButton $w={44} $on aria-label="Cursor"><Tool name="cursor" /></ToolButton>
      </ToolGroup>
      <ToolGroup><ToolButton $w={42} aria-label="Macros"><Tool name="target" /></ToolButton></ToolGroup>
      <ToolGroup><ToolButton $w={42} aria-label="Help">?</ToolButton></ToolGroup>
      <ToolGroup><ToolButton $w={42} aria-label="Video"><Tool name="film" /></ToolButton></ToolGroup>
      <ToolGroup><ToolButton $w={62} aria-label="Pages"><Tool name="grid" /><Down /></ToolButton></ToolGroup>
      <RightTools>
        <PlainButton aria-label="Account">
          <Glyph w={28} h={28}><circle cx="14" cy="9" r="8" {...line} strokeWidth="2" /><path d="M1 28c2-14 24-14 26 0" {...line} strokeWidth="2" /></Glyph>
        </PlainButton>
        <PlainButton aria-label="Sync">
          <Glyph w={28} h={28}><circle cx="14" cy="14" r="13" {...line} strokeWidth="2" /><path d="M9 8h2v8h3l-4 5-4-5h3zM17 20h2v-8h3l-4-5-4 5h3z" /></Glyph>
        </PlainButton>
        <PlainButton aria-label="Home">
          <Glyph w={28} h={28}><path d="M2 12L14 1l12 11v13q0 2-2 2H4q-2 0-2-2z" {...line} strokeWidth="2.500" /></Glyph>
        </PlainButton>
        <PlainButton aria-label="Document" $color="#4d5054">
          <Glyph w={28} h={28}><path d="M5 3q0-2 2-2h9l8 8v16q0 2-2 2H7q-2 0-2-2z" {...line} strokeWidth="2" /></Glyph>
        </PlainButton>
      </RightTools>
    </Toolbar>
  );
}

function TransportSection() {
  const dots = Array.from({ length: 12 }, (_, i) => (i * Math.PI) / 6 + 0.26);
  const ticks = Array.from({ length: 28 }, (_, i) => i);
  return (
    <TransportBar>
      <Transport>
        <Cell $w={52}>
          <Value>
            <Glyph w={34} h={18} style={{ color: '#56636d' }}>
              <circle cx="17" cy="9" r="8" {...line} strokeWidth="1.500" />
              <circle cx="17" cy="9" r="4.500" {...line} strokeWidth="2" strokeDasharray="2 2.500" />
              <path d="M0 5l5 4-5 4zM29 5l5 4-5 4z" fill="#3b444b" />
            </Glyph>
          </Value>
          <Caption>MIDI</Caption>
        </Cell>
        <Cell $w={90}>
          <Value>
            <Glyph w={81} h={16}>
              <path d="M0 0h81v7H0zM0 9h81v7H0z" fill="#2e3236" />
              <path d="M75 0h6v7h-6zM75 9h6v7h-6z" fill="#232629" />
              <path d="M0 0h4v7H0z" fill="#4aa5cd" />
            </Glyph>
          </Value>
          <Caption>퍼포먼스</Caption>
        </Cell>
        <Cell $w={62}>
          <Glyph w={32} h={32} style={{ color: '#b2b4b5' }}>
            {dots.map((a) => <circle key={a} cx={16 + 13 * Math.cos(a)} cy={16 + 13 * Math.sin(a)} r="1.800" />)}
          </Glyph>
        </Cell>
        <Cell $w={86} $align="flex-start"><Value>44.1 kHz</Value><Caption $color="#dcddde">0.0 ms</Caption></Cell>
        <Cell $w={100} $align="flex-start"><Value>11:09 일</Value><Caption>레코딩 최대</Caption></Cell>
        <Cell $w={132} $right={38} $align="flex-end">
          <Value $color="#a3a5a7">00:00:00.000</Value>
          <Caption $right={8}>초 <Down color="#77797c" /></Caption>
        </Cell>
        <Cell $w={182} $right={14}>
          <Value $big $color="#d2d3d4">00001.01.01.00</Value>
          <Caption $left={26}>마디 <Down color="#77797c" /></Caption>
        </Cell>
        <TransportButton $w={36} aria-label="Previous bar"><Glyph w={14} h={15}><path d="M14 0v15L0 7.500z" /></Glyph></TransportButton>
        <TransportButton $w={28} aria-label="Rewind"><Glyph w={22} h={15}><path d="M12 0v15L0 7.500zM22 0v15L10 7.500z" /></Glyph></TransportButton>
        <TransportButton $w={48} aria-label="Forward"><Glyph w={22} h={15}><path d="M0 0v15l12-7.500zM10 0v15l12-7.500z" /></Glyph></TransportButton>
        <TransportButton $w={16} aria-label="Next bar"><Glyph w={14} h={15}><path d="M0 0v15l14-7.500z" /></Glyph></TransportButton>
        <TransportButton $w={41} aria-label="Return to zero"><Glyph w={15} h={17}><path d="M0 0h2v17H0zM15 1v15L2 8.500z" /></Glyph></TransportButton>
        <TransportButton $w={52} $color="#30b2da" aria-label="Stop"><Glyph w={26} h={26}><path d="M0 0h26v26H0z" /></Glyph></TransportButton>
        <TransportButton $w={40} aria-label="Play"><Glyph w={22} h={26}><path d="M0 0v26l22-13z" /></Glyph></TransportButton>
        <TransportButton $w={42} aria-label="Record"><Glyph w={26} h={26}><circle cx="13" cy="13" r="12.500" /></Glyph></TransportButton>
        <TransportButton $w={64} $color="#8b8d8f" aria-label="Loop">
          <Glyph w={40} h={26}>
            <path d="M17 15l-5 9C-1 23-1 2 10 2h20c11 0 11 21 0 22h-7l5-9" {...line} strokeWidth="3" />
          </Glyph>
        </TransportButton>
        <Locators>
          <b>L</b><LocatorLink /><span>00001.01.01.00</span>
          <b>R</b><span>00019.01.01.00</span>
        </Locators>
        <IconGrid>
          <Glyph w={21} h={10}><path d="M0 2h8l5 6h8M0 6h5M14 4" {...line} strokeWidth="2" /></Glyph>
          <Glyph w={20} h={12}><path d="M0 0h2v12H0zM8 1h2v4h2V2h7v8h-7V7h-2v4H8zM4 5h2v2H4z" /></Glyph>
          <Glyph w={14} h={14}><circle cx="7" cy="7" r="4" {...line} strokeWidth="2.500" /><circle cx="7" cy="7" r="6" {...line} strokeWidth="2" strokeDasharray="2.300 2.400" /></Glyph>
          <Glyph w={22} h={12}><path d="M0 5h3v2H0zM19 5h3v2h-3zM5 1h2v4h8V1h2v10h-2V9H7v2H5z" /></Glyph>
        </IconGrid>
        <Cell $w={78}>
          <IconLine>
            <Glyph w={12} h={12} style={{ color: '#6c7676' }}><circle cx="6" cy="6" r="6" /></Glyph>
            <Wrench size={13} />
            <Glyph w={14} h={13}><path d="M5 1l4-1 5 13H0z" /><path d="M4 4l8 5M2 10h10" stroke="#151617" /></Glyph>
          </IconLine>
          <Caption>메트로놈</Caption>
        </Cell>
        <Cell $w={76}><Value>4 / 4</Value><Caption>박자</Caption></Cell>
        <Cell $w={66}><Value>0</Value><Caption>트랜스포즈</Caption></Cell>
        <Cell $w={84} $right={8}><Value>120.00</Value><Caption>템포</Caption></Cell>
        <Glyph w={114} h={34}>
          <path d="M0 1h83v5H0zM0 7h83v5H0z" fill="#2e3236" />
          <path d="M85 1h27v11H85z" fill="#27292b" />
          {ticks.map((i) => <rect key={i} x={i * 3} y="22" width="2" height="11" fill={i < 19 ? '#4a95b8' : '#303438'} />)}
          <rect x="56" y="22" width="2" height="11" fill="#dfe2e4" />
          <g fill="#4fbfe4"><circle cx="98" cy="28" r="6" /><circle cx="106" cy="28" r="5" fill="none" stroke="#4fbfe4" strokeWidth="2" /></g>
        </Glyph>
      </Transport>
      <ViewButtons>
        {['편집', '믹스', '브라우즈'].map((v) => <ViewButton key={v}>{v}</ViewButton>)}
      </ViewButtons>
    </TransportBar>
  );
}

export default function App() {
  return (
    <Window>
      <GlobalStyle />
      <TitleBar>
        <Glyph w={20} h={20}>
          <rect width="20" height="20" rx="5" fill="#1583f0" />
          <path d="M4 18c-2-6 5-6 3-14M9 19c-2-6 5-8 3-17M14 18c-2-6 4-6 3-13" fill="none" stroke="#0b4596" strokeWidth="1.500" />
        </Glyph>
        <Title>Studio One - 2025-05-11 이 영우*</Title>
        <WindowButton aria-label="Minimize"><Glyph w={12} h={12}><path d="M0 6h12" {...line} /></Glyph></WindowButton>
        <WindowButton aria-label="Restore">
          <Glyph w={12} h={12}><rect x="0.500" y="2.500" width="9" height="9" rx="1.500" {...line} /><path d="M3 0.500h6q2.500 0 2.500 2.500v6" {...line} /></Glyph>
        </WindowButton>
        <WindowButton aria-label="Close"><Glyph w={12} h={12}><path d="M0 0l12 12M12 0L0 12" {...line} strokeWidth="1.200" /></Glyph></WindowButton>
      </TitleBar>
      <MenuBar>{menu.map((m) => <MenuItem key={m}>{m}</MenuItem>)}</MenuBar>
      <MainToolbar />
      <Workspace>
        <Frame>
          <Panel>
            <SideTools>
              <PlainButton aria-label="Track list"><Glyph w={22} h={15}><path d="M0 0h22v2H0zM0 4h22v2H0zM0 8h22v2H0zM0 12h22v2H0z" /></Glyph></PlainButton>
              <PlainButton $w={20} aria-label="Inspector"><Glyph w={4} h={18}><path d="M0 0h4v4H0zM0 6h4v12H0z" /></Glyph></PlainButton>
              <PlainButton $w={20} aria-label="Options"><Wrench /></PlainButton>
              <PlainButton aria-label="Automation">
                <Glyph w={30} h={20}>
                  <path d="M2 17C3 8 7 3 13 2l7 15 7-15" {...line} strokeWidth="1.600" />
                  <circle cx="2" cy="17" r="2" /><circle cx="13" cy="2" r="2" /><circle cx="20" cy="17" r="2" /><circle cx="27" cy="2" r="2" />
                </Glyph>
              </PlainButton>
              <MarkerTools $gap={16}>
                <PlainButton aria-label="Track height"><Glyph w={21} h={17}><path d="M0 0h21v3H0zM0 7h5v3H0zM8 7h13v3H8zM0 14h21v3H0z" /></Glyph></PlainButton>
                <PlainButton aria-label="Add track"><Glyph w={18} h={18}><path d="M7 0h4v7h7v4h-7v7H7v-7H0V7h7z" /></Glyph></PlainButton>
              </MarkerTools>
            </SideTools>
            <BarRuler />
            <MarkerHead>
              <span>마커</span>
              <MarkerTools $gap={18} $left="73px">
                <PlainButton aria-label="Add marker"><Glyph w={14} h={14}><path d="M5 0h3v5h6v3H8v6H5V8H0V5h5z" /></Glyph></PlainButton>
                <PlainButton aria-label="Remove marker"><Glyph w={13} h={3}><path d="M0 0h13v3H0z" /></Glyph></PlainButton>
              </MarkerTools>
              <MarkerTools $gap={24}>
                <Glyph w={15} h={14}><path d="M4 2l11-2v10q-1 3-4 3-2-2 0-4l2 0V4L6 5v7q-2 3-5 2-2-2 1-4h2z" /></Glyph>
                <Glyph w={21} h={19}><path d="M1 19V1h19l-5 11H1" {...line} strokeWidth="1.500" /></Glyph>
              </MarkerTools>
            </MarkerHead>
            <MarkerLane>
              <GridLines />
              <MarkerFlag style={{ left: barX(3) + 1 }}><MarkerName>Chorus</MarkerName></MarkerFlag>
            </MarkerLane>
            <Divider />
            <TrackColumn>
              <TrackRows>{tracks.map((t, i) => <TrackHeader key={i} {...t} />)}</TrackRows>
            </TrackColumn>
            <Arrange>
              <Lanes>
                <GridLines />
                <LaneRows>
                  {tracks.map((t, i) => (
                    <Lane key={i} $selected={t.selected}>
                      {i === 2 && <Stripes ranges={[[5.45, 6.45], [9.45, 10.45], [13.45, 14.45], [17.5, 18.5], [19.25, 23], [25.5, 27]]} fill="#19d3e0" base="#17535a" />}
                      {i === 3 && <Stripes ranges={[[3, 27]]} fill="rgba(77, 118, 124, 0.85)" />}
                      {i === 4 && <Stripes ranges={[[3, 27]]} fill="rgba(74, 122, 103, 0.85)" thin />}
                      {(clips[i] || []).map((c, n) => <ClipView key={n} {...c} />)}
                    </Lane>
                  ))}
                </LaneRows>
              </Lanes>
              <TrackRows>
                {tracks.map((t, i) => (
                  <ChevronCell key={i}>
                    {t.kind !== 'folder' && <Glyph w={10} h={16}><path d="M2 2l6 6-6 6" {...line} strokeWidth="3" /></Glyph>}
                  </ChevronCell>
                ))}
              </TrackRows>
              <ScrollColumn>
                <Glyph w={11} h={8}><path d="M5.500 0L11 8H0z" /></Glyph>
                <Glyph w={11} h={8}><path d="M5.500 8L11 0H0z" /></Glyph>
              </ScrollColumn>
            </Arrange>
            <SideFoot>
              <FootButton $w={62}>M</FootButton>
              <FootButton $w={20}>S</FootButton>
              <FootMode>
                <select aria-label="Track size"><option>노멀</option></select>
                <Down />
              </FootMode>
              <Glyph w={10} h={12} style={{ color: '#6d6f73' }}><path d="M0 0h10v2H0zM0 3h10v2H0zM0 7h10v2H0zM0 10h10v2H0z" /></Glyph>
            </SideFoot>
            <ScrollRow>
              <Glyph w={7} h={12}><path d="M7 0v12L0 6z" /></Glyph>
              <ScrollTrack><ScrollThumb /></ScrollTrack>
              <Glyph w={7} h={12}><path d="M0 0v12l7-6z" /></Glyph>
              <ZoomSlider type="range" readOnly value={13} aria-label="Zoom" />
              <Glyph w={15} h={14}><path d="M6 0h9v3H6zM6 5h9v3H6zM0 10h2v2H0zM4 10h2v2H4z" /></Glyph>
            </ScrollRow>
          </Panel>
        </Frame>
      </Workspace>
      <TransportSection />
    </Window>
  );
}
